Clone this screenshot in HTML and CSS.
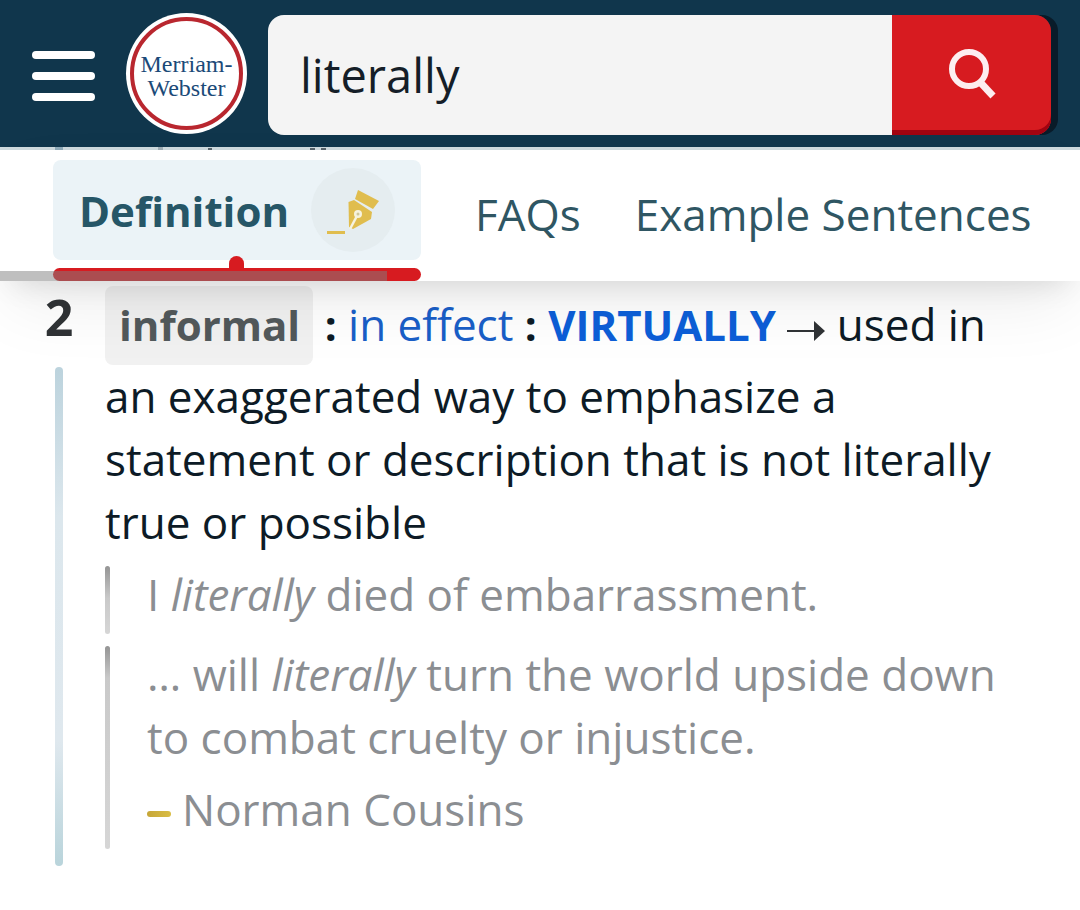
FILE: index.html
```html
<!DOCTYPE html>
<html lang="en">
<head>
<meta charset="utf-8">
<meta name="viewport" content="width=device-width, initial-scale=1">
<title>Literally Definition &amp; Meaning</title>
<link rel="stylesheet" href="styles.css">
</head>
<body>
<header class="site-header">
  <button class="menu-button" type="button" aria-label="Menu"><span></span><span></span><span></span></button>
  <a class="logo" href="#"><span class="logo-ring">Merriam-<br>Webster</span></a>
  <form class="search" role="search">
    <input class="search-input" type="text" value="literally" aria-label="Search the dictionary">
    <button class="search-button" type="button" aria-label="Search">
      <svg width="50" height="54" viewBox="0 0 50 54" fill="none" stroke="#fdeef0" stroke-width="6"><circle cx="22" cy="22" r="17"/><path d="M33 35L46 49" stroke-width="7"/></svg>
    </button>
  </form>
</header>
<div class="scroll-strip"></div>
<nav class="tabs" aria-label="Page sections">
  <a class="tab tab-active" href="#definition">Definition
    <span class="tab-badge">
      <svg width="56" height="48" viewBox="0 0 56 48"><g fill="#e0bd4e"><path d="M33 4L54 15L48 23L30 13Z"/><path d="M23.500 16L29 14L47 26L46 33L28 43L24 41Z"/><path d="M2 45H20V48H2Z"/></g><path d="M33 28L25 43" stroke="#f6f3df" stroke-width="2.500"/><circle cx="33" cy="28" r="4" fill="#f6f3df"/><circle cx="33" cy="28" r="1.500" fill="#cfc79c"/></svg>
    </span>
  </a>
  <a class="tab" href="#faqs">FAQs</a>
  <a class="tab" href="#examples">Example Sentences</a>
  <div class="progress"></div>
</nav>
<main class="entry" id="definition">
  <div class="sense-marker"><span class="sense-number">2</span><span class="sense-line"></span></div>
  <div class="sense">
    <p class="meaning"><span class="label">informal</span> <b>:</b> <a href="#">in effect</a> <b>:</b> <a class="strong-link" href="#">VIRTUALLY</a> <svg class="arrow" width="38" height="20" viewBox="0 0 38 20" fill="#303336"><path d="M0 9H27V0L38 10L27 20V11H0Z"/></svg> used in an exaggerated way to emphasize a statement or description that is not literally true or possible</p>
    <blockquote class="quote"><p>I <em>literally</em> died of embarrassment.</p></blockquote>
    <blockquote class="quote">
      <div>
        <p>… will <em>literally</em> turn the world upside down to combat cruelty or injustice.</p>
        <p class="author"><span class="dash"></span>Norman Cousins</p>
      </div>
    </blockquote>
  </div>
</main>
</body>
</html>
```
FILE: styles.css
```css
* { box-sizing: border-box; }
body {
  margin: 0;
  background: #fff;
  color: #0d1b26;
  font: 44px/63px "Open Sans", sans-serif;
  overflow-x: hidden;
}
p, blockquote { margin: 0; }
a { color: #1a5fc8; text-decoration: none; }
b { font-size: 42px; }
button { border: 0; padding: 0; background: none; cursor: pointer; }

.site-header {
  display: flex;
  align-items: flex-start;
  padding: 13px 29px 12px 32px;
  background: #10364c;
}
.menu-button { display: flex; flex-direction: column; gap: 13px; width: 63px; margin-top: 38px; }
.menu-button span { height: 8px; border-radius: 4px; background: #fff; }
.logo {
  flex: none;
  width: 121px;
  height: 121px;
  margin-left: 31px;
  padding: 4px;
  border-radius: 50%;
  background: #fff;
}
.logo-ring {
  display: block;
  height: 100%;
  padding-top: 31px;
  border: 4px solid #b9272f;
  border-radius: 50%;
  color: #1b4a78;
  font: 24px/24px "Liberation Serif", serif;
  text-align: center;
  white-space: nowrap;
}
.search {
  display: flex;
  flex: 1;
  min-width: 0;
  height: 120px;
  margin: 2px 0 0 21px;
  border-radius: 16px;
  box-shadow: 7px 0 #091b29;
}
.search-input {
  flex: 1;
  min-width: 0;
  padding: 0 32px;
  border: 0;
  border-radius: 16px 0 0 16px;
  background: #f4f4f4;
  color: #151e28;
  font: 47px "Open Sans", sans-serif;
}
.search-button {
  width: 159px;
  border-radius: 0 16px 16px 0;
  background: #d71b20;
  box-shadow: inset 0 -5px #a10310;
}
.scroll-strip {
  height: 3px;
  background:
    linear-gradient(#8fabba, #8fabba) 55px 0 / 8px 3px no-repeat,
    linear-gradient(#a0aeb6, #a0aeb6) 158px 0 / 5px 3px no-repeat,
    linear-gradient(#58646c, #58646c) 208px 1px / 4px 2px no-repeat,
    linear-gradient(#58646c, #58646c) 310px 1px / 5px 2px no-repeat,
    linear-gradient(#58646c, #58646c) 321px 1px / 5px 2px no-repeat,
    #cedade;
}

.tabs {
  position: relative;
  z-index: 1;
  display: flex;
  gap: 54px;
  padding: 10px 0 21px 53px;
  background: #fff;
  box-shadow: 0 14px 28px -12px rgba(0, 0, 0, .12), 0 30px 70px -10px rgba(0, 0, 0, .08);
}
.tab { color: #2f5663; padding-top: 23px; white-space: nowrap; }
.tab-active {
  position: relative;
  display: flex;
  align-items: center;
  gap: 22px;
  height: 100px;
  padding: 0 26px;
  border-radius: 8px;
  background: #ebf3f7;
  color: #265667;
  font-size: 42px;
  font-weight: 700;
}
.tab-active::before, .tab-active::after { content: ""; position: absolute; background: #d71b20; }
.tab-active::before { left: 50%; bottom: -11px; width: 15px; height: 15px; margin-left: -8px; border-radius: 8px 8px 0 0; }
.tab-active::after { left: 0; right: 0; bottom: -21px; height: 13px; border-radius: 7px; }
.tab-badge { display: flex; align-items: center; justify-content: center; width: 84px; height: 84px; border-radius: 50%; background: #e5edf0; }
.progress { position: absolute; left: 0; bottom: 0; width: 387px; height: 10px; background: rgba(128, 128, 128, .5); }

.entry { display: flex; gap: 27px; padding: 5px 48px 44px 40px; }
.sense-marker { display: flex; flex-direction: column; align-items: center; width: 38px; }
.sense-number { color: #303336; font-size: 50px; font-weight: 700; line-height: 63px; }
.sense-line {
  flex: 1;
  width: 8px;
  margin-top: 18px;
  border-radius: 4px;
  background: linear-gradient(#bcd3dd, #dce7ed 30%, #dfe8ee 75%, #b9d4db);
}
.sense { flex: 1; min-width: 0; padding-bottom: 17px; }
.label {
  display: inline-block;
  padding: 7px 13px 9px 14px;
  border-radius: 8px;
  background: #f1f1f1;
  color: #52595b;
  font-size: 42px;
  font-weight: 700;
}
.strong-link { color: #0d5fd8; font-size: 42px; font-weight: 700; }
.quote { display: flex; gap: 37px; margin-top: 9px; color: #8b8e92; }
.quote > * { padding-bottom: 8px; }
.quote::before {
  content: "";
  flex: none;
  width: 5px;
  margin-top: 3px;
  border-radius: 3px;
  background: linear-gradient(#949494, #c9c9c9 32px, #d6d6d6);
}
.author { display: flex; align-items: center; gap: 11px; margin-top: 9px; }
.dash { width: 24px; height: 6px; margin-top: 9px; border-radius: 3px; background: linear-gradient(90deg, #c6a638, #d9bd44); }
```
